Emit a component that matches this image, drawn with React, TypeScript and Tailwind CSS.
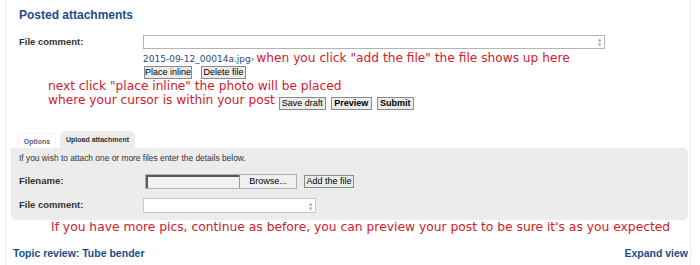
import React from "react";

const Btn = ({ children, bold = false, w }: { children: React.ReactNode; bold?: boolean; w: string }) => (
  <span
    className={`inline-flex items-center justify-center whitespace-nowrap h-[13px] ${w} border border-[#8a8a8a] bg-[#ececec] text-[9px] leading-none text-black font-['Liberation_Sans',sans-serif] ${bold ? "font-bold" : ""}`}
  >
    {children}
  </span>
);

const Spin = () => (
  <span className="flex flex-col items-center justify-center text-[#a0a0a0] text-[4px] leading-[5px] pr-[3px]">
    <span>▲</span>
    <span>▼</span>
  </span>
);

export default function App() {
  const red = "text-[#d0202c]";
  const label = "text-[9.5px] font-bold text-[#333] font-['Liberation_Sans',sans-serif]";
  return (
    <div className="w-[700px] h-[265px] bg-white overflow-hidden font-['DejaVu_Sans',sans-serif] text-[#333]">
      <div className="ml-[5px] w-[686px] h-[265px] border-x border-[#ececec] flex flex-col">
        <div className="pl-[13px] pt-[8px] text-[12px] font-bold text-[#1b4d8a] font-['Liberation_Sans',sans-serif] leading-[14px]">
          Posted attachments
        </div>
        <div className="flex mt-[13px] pl-[13px]">
          <div className={`w-[124px] leading-[14px] ${label}`}>File comment:</div>
          <div className="w-[462px] h-[14px] border border-[#b4b4b4] flex justify-end">
            <Spin />
          </div>
        </div>
        <div className="flex items-end pl-[137px] h-[16px]">
          <span className="text-[9px] text-[#1b4d8a] leading-[12px]">2015-09-12_00014a.jpg›</span>
          <span className={`ml-[2px] text-[12.2px] leading-[14px] whitespace-nowrap ${red}`}>
            when you click "add the file" the file shows up here
          </span>
        </div>
        <div className="flex gap-[9px] pl-[138px] mt-[1px]">
          <Btn w="w-[48px]">Place inline</Btn>
          <Btn w="w-[45px]">Delete file</Btn>
        </div>
        <div className={`pl-[42px] text-[12.2px] leading-[14px] whitespace-nowrap ${red}`}>
          next click "place inline" the photo will be placed
        </div>
        <div className="pl-[42px] flex items-end gap-[4px]">
          <span className={`text-[12.2px] leading-[14px] whitespace-nowrap ${red}`}>where your cursor is within your post</span>
          <span className="flex gap-[5px] mb-[-3px]">
            <Btn w="w-[47px]">Save draft</Btn>
            <Btn w="w-[41px]" bold>Preview</Btn>
            <Btn w="w-[37px]" bold>Submit</Btn>
          </span>
        </div>
        <div className="flex items-end pl-[12px] mt-[24px] gap-[4px] font-['Liberation_Sans',sans-serif] text-[7px] font-bold leading-none">
          <div className="h-[15px] w-[38px] flex items-center justify-center text-[#536482] bg-white border border-b-0 border-[#f2f2f2] rounded-t-[4px]">
            Options
          </div>
          <div className="h-[17px] w-[75px] flex items-center justify-center bg-[#ececec] rounded-t-[5px] text-[#333]">
            Upload attachment
          </div>
        </div>
        <div className="ml-[5px] w-[677px] h-[72px] bg-[#ececec] rounded-[5px] rounded-tl-none flex flex-col">
          <div className="pl-[8px] pt-[5px] text-[8.4px] leading-[11px] font-['Liberation_Sans',sans-serif] text-[#333]">
            If you wish to attach one or more files enter the details below.
          </div>
          <div className="flex items-center mt-[9px] pl-[8px] h-[16px]">
            <div className={`w-[126px] ${label}`}>Filename:</div>
            <div className="flex items-center h-[15px] w-[152px] border border-[#b0b0b0] bg-[#f4f4f4]">
              <div className="flex-1 h-full border-l-2 border-t-2 border-[#5a5a5a] bg-[#f2f2f2]"></div>
              <div className="w-[57px] h-full flex items-center justify-center bg-[#f0f0f0] border-l border-[#9a9a9a] text-[9px] leading-none text-black font-['Liberation_Sans',sans-serif]">
                Browse...
              </div>
            </div>
            <span className="ml-[7px] flex">
              <Btn w="w-[50px]">Add the file</Btn>
            </span>
          </div>
          <div className="flex items-center mt-[9px] pl-[8px] h-[15px]">
            <div className={`w-[124px] ${label}`}>File comment:</div>
            <div className="w-[173px] h-[15px] border border-[#c8c8c8] bg-white flex justify-end">
              <Spin />
            </div>
          </div>
        </div>
        <div className={`pl-[45px] text-[12.3px] leading-[14px] whitespace-nowrap ${red}`}>
          If you have more pics, continue as before, you can preview your post to be sure it's as you expected
        </div>
        <div className="flex justify-between pl-[7px] pr-[2px] mt-[13px] font-['Liberation_Sans',sans-serif] text-[10.5px] font-bold text-[#1b4d8a] leading-[13px]">
          <span>Topic review: Tube bender</span>
          <span>Expand view</span>
        </div>
      </div>
    </div>
  );
}
